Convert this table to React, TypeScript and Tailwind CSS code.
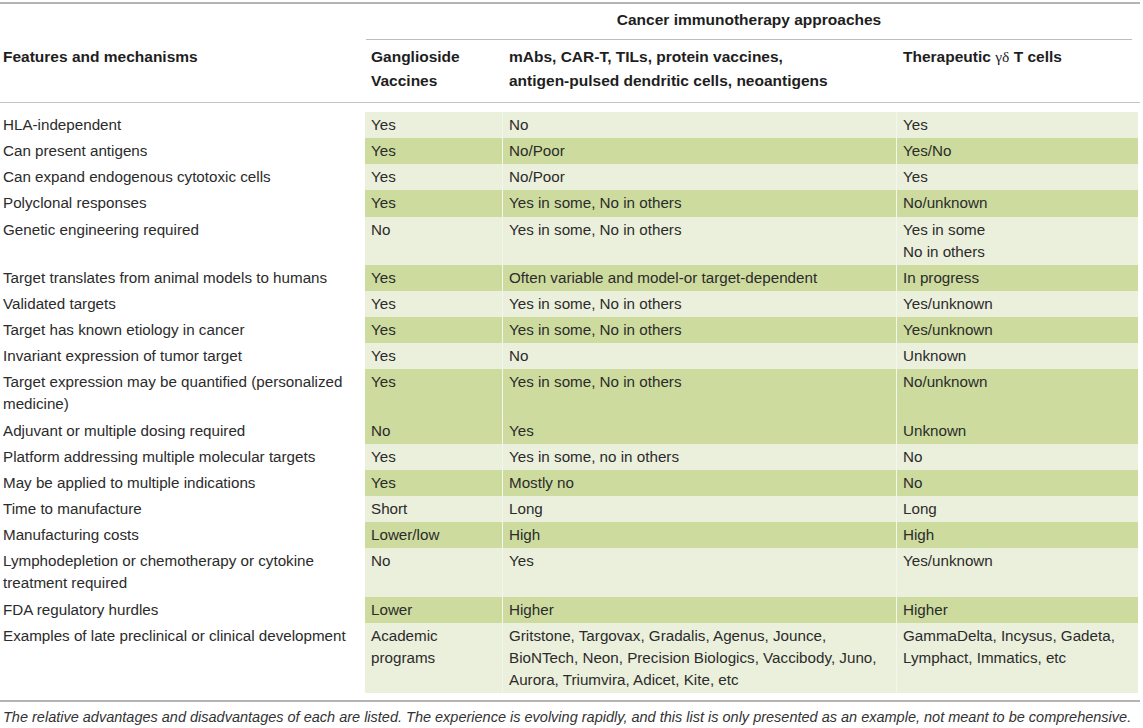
type Row = {
  feature: string[]
  ganglioside: string[]
  others: string[]
  gammaDelta: string[]
  dark?: boolean
}

const rows: Row[] = [
  { feature: ['HLA-independent'], ganglioside: ['Yes'], others: ['No'], gammaDelta: ['Yes'] },
  { feature: ['Can present antigens'], ganglioside: ['Yes'], others: ['No/Poor'], gammaDelta: ['Yes/No'], dark: true },
  { feature: ['Can expand endogenous cytotoxic cells'], ganglioside: ['Yes'], others: ['No/Poor'], gammaDelta: ['Yes'] },
  { feature: ['Polyclonal responses'], ganglioside: ['Yes'], others: ['Yes in some, No in others'], gammaDelta: ['No/unknown'], dark: true },
  { feature: ['Genetic engineering required'], ganglioside: ['No'], others: ['Yes in some, No in others'], gammaDelta: ['Yes in some', 'No in others'] },
  { feature: ['Target translates from animal models to humans'], ganglioside: ['Yes'], others: ['Often variable and model-or target-dependent'], gammaDelta: ['In progress'], dark: true },
  { feature: ['Validated targets'], ganglioside: ['Yes'], others: ['Yes in some, No in others'], gammaDelta: ['Yes/unknown'] },
  { feature: ['Target has known etiology in cancer'], ganglioside: ['Yes'], others: ['Yes in some, No in others'], gammaDelta: ['Yes/unknown'], dark: true },
  { feature: ['Invariant expression of tumor target'], ganglioside: ['Yes'], others: ['No'], gammaDelta: ['Unknown'] },
  { feature: ['Target expression may be quantified (personalized', 'medicine)'], ganglioside: ['Yes'], others: ['Yes in some, No in others'], gammaDelta: ['No/unknown'], dark: true },
  { feature: ['Adjuvant or multiple dosing required'], ganglioside: ['No'], others: ['Yes'], gammaDelta: ['Unknown'], dark: true },
  { feature: ['Platform addressing multiple molecular targets'], ganglioside: ['Yes'], others: ['Yes in some, no in others'], gammaDelta: ['No'] },
  { feature: ['May be applied to multiple indications'], ganglioside: ['Yes'], others: ['Mostly no'], gammaDelta: ['No'], dark: true },
  { feature: ['Time to manufacture'], ganglioside: ['Short'], others: ['Long'], gammaDelta: ['Long'] },
  { feature: ['Manufacturing costs'], ganglioside: ['Lower/low'], others: ['High'], gammaDelta: ['High'], dark: true },
  { feature: ['Lymphodepletion or chemotherapy or cytokine', 'treatment required'], ganglioside: ['No'], others: ['Yes'], gammaDelta: ['Yes/unknown'] },
  { feature: ['FDA regulatory hurdles'], ganglioside: ['Lower'], others: ['Higher'], gammaDelta: ['Higher'], dark: true },
  {
    feature: ['Examples of late preclinical or clinical development'],
    ganglioside: ['Academic', 'programs'],
    others: [
      'Gritstone, Targovax, Gradalis, Agenus, Jounce,',
      'BioNTech, Neon, Precision Biologics, Vaccibody, Juno,',
      'Aurora, Triumvira, Adicet, Kite, etc',
    ],
    gammaDelta: ['GammaDelta, Incysus, Gadeta,', 'Lymphact, Immatics, etc'],
  },
]

function Lines({ lines }: { lines: string[] }) {
  return (
    <>
      {lines.map((line, i) => (
        <div key={i} className="whitespace-nowrap">{line}</div>
      ))}
    </>
  )
}

function BodyRow({ row }: { row: Row }) {
  const tone = row.dark ? 'bg-[#cddb9f]' : 'bg-[#ebf0dc]'
  const cell = `pl-[6px] pt-[2px] pb-[2.17px] ${tone}`
  return (
    <div className="flex leading-[22px]">
      <div className="w-[365px] shrink-0 pl-[3px] pt-[2px] pb-[2.17px]">
        <Lines lines={row.feature} />
      </div>
      <div className={`w-[138px] shrink-0 border-r border-[#f3f6ea] ${cell}`}>
        <Lines lines={row.ganglioside} />
      </div>
      <div className={`w-[394px] shrink-0 border-r border-[#f3f6ea] ${cell}`}>
        <Lines lines={row.others} />
      </div>
      <div className={`w-[241px] shrink-0 ${cell}`}>
        <Lines lines={row.gammaDelta} />
      </div>
    </div>
  )
}

export default function App() {
  return (
    <div
      className="h-[728px] w-[1143px] bg-white text-[15.2px] text-[#2b2b2b]"
      style={{ fontFamily: '"Liberation Sans", Arial, sans-serif' }}
    >
      <div className="w-[1140px] pt-[2px]">
        <div className="h-[2px] bg-[#b4b4b4]" />

        <div className="flex text-[15.5px] font-bold leading-[24px] text-[#1e1e1e]">
          <div className="w-[365px] shrink-0" />
          <div className="w-[773px] shrink-0">
            <div className="ml-[1px] mr-[6px] border-b border-[#bdbdbd] pt-[4px] pb-[7px] text-center">
              Cancer immunotherapy approaches
            </div>
          </div>
        </div>

        <div className="flex border-b border-[#c4c4c4] pb-[9px] text-[15.5px] font-bold leading-[24px] text-[#1e1e1e]">
          <div className="w-[365px] shrink-0 pl-[3px] pt-[5px]">Features and mechanisms</div>
          <div className="w-[138px] shrink-0 pl-[6px] pt-[5px]">
            Ganglioside
            <br />
            Vaccines
          </div>
          <div className="w-[394px] shrink-0 pl-[6px] pt-[5px] whitespace-nowrap">
            mAbs, CAR-T, TILs, protein vaccines,
            <br />
            antigen-pulsed dendritic cells, neoantigens
          </div>
          <div className="w-[241px] shrink-0 pl-[6px] pt-[5px] whitespace-nowrap">
            Therapeutic{' '}
            <span className="font-normal" style={{ fontFamily: '"Liberation Serif", "Times New Roman", serif' }}>
              γδ
            </span>{' '}
            T cells
          </div>
        </div>

        <div className="pt-[9px]">
          {rows.map((row, i) => (
            <BodyRow key={i} row={row} />
          ))}
        </div>

        <div className="mt-[7px] h-[2px] bg-[#b4b4b4]" />

        <p className="pl-[3px] pt-[6px] text-[14.5px] italic leading-[18px] whitespace-nowrap text-[#333]">
          The relative advantages and disadvantages of each are listed. The experience is evolving rapidly, and this
          list is only presented as an example, not meant to be comprehensive.
        </p>
      </div>
    </div>
  )
}
